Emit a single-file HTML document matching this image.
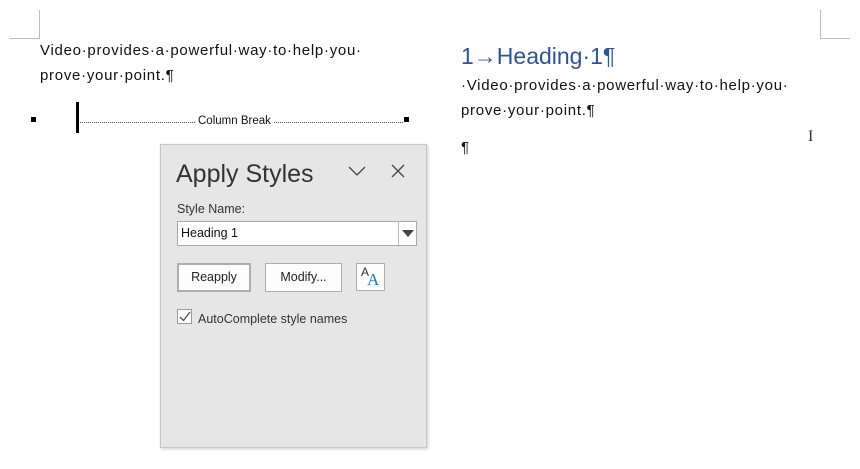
<!DOCTYPE html>
<html><head><style>
body{margin:0;width:860px;height:469px;background:#fff;position:relative;overflow:hidden;font-family:"Liberation Sans",sans-serif;}
.a{position:absolute;white-space:nowrap;}
.t{font-size:15px;color:#111;letter-spacing:0.72px;}
.ln{position:absolute;background:#bbb;}
.btn{position:absolute;background:#fdfdfd;border:1px solid #adadad;font-size:12.5px;color:#222;text-align:center;box-sizing:border-box;}
</style></head><body>
<div class="ln" style="left:39px;top:10px;width:1px;height:29px"></div>
<div class="ln" style="left:10px;top:38px;width:30px;height:1px"></div>
<div class="ln" style="left:820px;top:10px;width:1px;height:29px"></div>
<div class="ln" style="left:820px;top:38px;width:30px;height:1px"></div>

<div class="a t" style="left:40px;top:42px">Video·provides·a·powerful·way·to·help·you·</div>
<div class="a t" style="left:40px;top:67px">prove·your·point.¶</div>

<div class="a" style="left:31px;top:117px;width:5px;height:5px;background:#000"></div>
<div class="a" style="left:404px;top:117px;width:5px;height:5px;background:#000"></div>
<div class="a" style="left:76px;top:102px;width:3px;height:31px;background:#000"></div>
<div class="a" style="left:80px;top:122px;width:323px;border-top:1px dotted #555"></div>
<div class="a" style="left:196px;top:115px;font-size:11.5px;background:#fff;padding:0 2px;color:#111">Column Break</div>

<div class="a" style="left:461px;top:43px;font-size:23px;color:#2f5496">1→Heading·1¶</div>
<div class="a t" style="left:461px;top:77px">·Video·provides·a·powerful·way·to·help·you·</div>
<div class="a t" style="left:461px;top:102px">prove·your·point.¶</div>
<div class="a t" style="left:461px;top:139px">¶</div>
<div class="a" style="left:808px;top:128px;font-size:16px;color:#333;font-family:'Liberation Serif',serif">I</div>

<div class="a" style="left:160px;top:144px;width:265px;height:302px;background:#e6e6e6;border:1px solid #c6c6c6;box-shadow:1px 1px 3px rgba(0,0,0,.2)">
  <div class="a" style="left:15px;top:15px;font-size:25px;color:#333">Apply Styles</div>
  <svg class="a" style="left:187px;top:20px" width="18" height="12"><path d="M1 2 L9 10 L17 2" stroke="#444" stroke-width="1.3" fill="none"/></svg>
  <svg class="a" style="left:230px;top:19px" width="14" height="14"><path d="M1 1L13 13M13 1L1 13" stroke="#444" stroke-width="1.3"/></svg>
  <div class="a" style="left:16px;top:57px;font-size:12.5px;color:#333">Style Name:</div>
  <div class="a" style="left:16px;top:76px;width:240px;height:25px;background:#fff;border:1px solid #aaa;box-sizing:border-box">
    <div class="a" style="left:3px;top:4px;font-size:12.5px;color:#111">Heading 1</div>
    <div class="a" style="left:220px;top:0;width:1px;height:23px;background:#bbb"></div>
    <svg class="a" style="left:224px;top:8px" width="12" height="8"><path d="M0 0H12L6 7Z" fill="#444"/></svg>
  </div>
  <div class="btn" style="left:16px;top:118px;width:74px;height:29px;border:2px solid #adadad;line-height:25px">Reapply</div>
  <div class="btn" style="left:104px;top:118px;width:77px;height:29px;line-height:27px">Modify...</div>
  <div class="btn" style="left:195px;top:118px;width:29px;height:28px">
    <span class="a" style="left:4px;top:1px;font-size:12px;color:#333">A</span>
    <span class="a" style="left:10px;top:6px;font-size:17px;color:#1e7cc8;font-family:'Liberation Serif',serif">A</span>
  </div>
  <div class="a" style="left:16px;top:164px;width:15px;height:15px;background:#fff;border:1px solid #999;box-sizing:border-box"></div>
  <svg class="a" style="left:18px;top:166px" width="12" height="11"><path d="M1 6L4.5 9.5L11 1" stroke="#555" stroke-width="1.4" fill="none"/></svg>
  <div class="a" style="left:37px;top:167px;font-size:12.5px;color:#333">AutoComplete style names</div>
</div>
</body></html>
